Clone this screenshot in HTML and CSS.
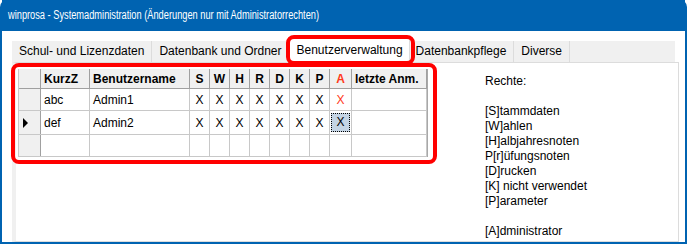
FILE: index.html
```html
<!DOCTYPE html>
<html lang="de">

<head>
    <meta charset="UTF-8">
    <title>winprosa - Systemadministration</title>
    <link rel="stylesheet" href="styles.css">
</head>

<body>
    <div class="window">
        <div class="titlebar"><span>winprosa - Systemadministration (Änderungen nur mit Administratorrechten)</span></div>

        <div class="client">
            <!-- Reiter -->
            <div class="tabs">
                <div class="tab">Schul- und Lizenzdaten</div>
                <div class="tab">Datenbank und Ordner</div>
                <div class="tab active marked">Benutzerverwaltung</div>
                <div class="tab">Datenbankpflege</div>
                <div class="tab">Diverse</div>
            </div>

            <div class="panel">
                <div class="grid-box marked">
                    <table class="grid">
                        <tr class="head">
                            <th class="ind"></th>
                            <th class="left">KurzZ</th>
                            <th class="left">Benutzername</th>
                            <th>S</th>
                            <th>W</th>
                            <th>H</th>
                            <th>R</th>
                            <th>D</th>
                            <th>K</th>
                            <th>P</th>
                            <th class="admin">A</th>
                            <th class="left">letzte Anm.</th>
                        </tr>
                        <tr>
                            <td class="ind"></td>
                            <td class="left">abc</td>
                            <td class="left">Admin1</td>
                            <td>X</td>
                            <td>X</td>
                            <td>X</td>
                            <td>X</td>
                            <td>X</td>
                            <td>X</td>
                            <td>X</td>
                            <td class="admin">X</td>
                            <td></td>
                        </tr>
                        <tr>
                            <td class="ind"><span class="arrow"></span></td>
                            <td class="left">def</td>
                            <td class="left">Admin2</td>
                            <td>X</td>
                            <td>X</td>
                            <td>X</td>
                            <td>X</td>
                            <td>X</td>
                            <td>X</td>
                            <td>X</td>
                            <td class="current"><span>X</span></td>
                            <td></td>
                        </tr>
                        <tr>
                            <td class="ind"></td>
                            <td></td>
                            <td></td>
                            <td></td>
                            <td></td>
                            <td></td>
                            <td></td>
                            <td></td>
                            <td></td>
                            <td></td>
                            <td></td>
                            <td></td>
                        </tr>
                    </table>
                </div>

                <!-- Legende der Rechte -->
                <div class="rights">
                    <p>Rechte:</p>
                    <p>&nbsp;</p>
                    <p>[S]tammdaten</p>
                    <p>[W]ahlen</p>
                    <p>[H]albjahresnoten</p>
                    <p>P[r]üfungsnoten</p>
                    <p>[D]rucken</p>
                    <p>[K] nicht verwendet</p>
                    <p>[P]arameter</p>
                    <p>&nbsp;</p>
                    <p>[A]dministrator</p>
                </div>
            </div>
        </div>
    </div>
</body>

</html>
```

FILE: styles.css
```css
html, body {
    margin: 0;
    height: 100%;
    overflow: hidden;
    background: #fff;
}

body {
    font-family: "Liberation Sans", Arial, sans-serif;
    font-size: 12px;
    color: #000;
}

/* Fensterrahmen */
.window {
    height: 100%;
    border: 2px solid #0063b1;
    border-top: 0;
    border-radius: 7px 7px 0 0;
    box-sizing: border-box;
    display: flex;
    flex-direction: column;
}

.titlebar {
    height: 31px;
    line-height: 31px;
    padding-left: 6px;
    background: #0063b1;
    color: #fff;
    white-space: nowrap;
}

/* Titelschrift ist schmaler als die normale Schrift */
.titlebar span {
    display: inline-block;
    font-size: 12.5px;
    transform: scaleX(0.74);
    transform-origin: left center;
}

.client {
    flex: 1;
    min-height: 0;
    padding: 10px 10px 0 10px;
    display: flex;
    flex-direction: column;
}

/* Reiter */
.tabs {
    display: flex;
    align-items: flex-end;
    flex: none;
    height: 21px;
    background: #f0f0f0;
}

.tab {
    height: 21px;
    line-height: 21px;
    padding: 0 7px;
    border-right: 1px solid #dcdcdc;
    white-space: nowrap;
    position: relative;
}

.tab.active {
    height: 23px;
    line-height: 22px;
    margin: 0 -1px 0 -2px;
    padding: 0 6px 0 8px;
    background: #fff;
    border: 1px solid #dcdcdc;
    border-bottom: 0;
    z-index: 1;
}

/* rote Markierungen */
.marked::after {
    content: "";
    position: absolute;
    border: 4px solid #ff0000;
    border-radius: 8px;
    pointer-events: none;
}

.tab.marked::after {
    top: -4px;
    bottom: -3px;
    left: -3px;
    right: -6px;
}

.panel {
    flex: 1;
    border: 1px solid #dcdcdc;
    border-left: 4px solid #f0f0f0;
    margin-right: -4px;
    padding: 6px 0 0 2px;
    display: flex;
    align-items: flex-start;
}

.grid-box {
    position: relative;
    border-left: 1px solid #c8c8c8;
    border-right: 1px solid #a8a8a8;
}

.grid-box.marked::after {
    top: -6px;
    bottom: -7px;
    left: -8px;
    right: -10px;
}

/* Tabelle */
.grid {
    border-collapse: collapse;
    table-layout: fixed;
}

.grid th,
.grid td {
    width: 19px;
    padding: 0;
    height: 21px;
    border: 1px solid #c8c8c8;
    border-top: 0;
    border-left: 0;
    text-align: center;
    white-space: nowrap;
    overflow: hidden;
}

.grid th {
    height: 19px;
    background: #f0f0f0;
    font-weight: bold;
    border-right-color: #a0a0a0;
    border-bottom-color: #a0a0a0;
}

.grid .left {
    text-align: left;
    padding-left: 3px;
}

.grid tr > :nth-child(1) { width: 21px; }
.grid tr > :nth-child(2) { width: 45px; }
.grid tr > :nth-child(3) { width: 96px; }
.grid tr > :nth-child(12) { width: 71px; }

.grid td.ind {
    background: #f0f0f0;
    border-right-color: #a0a0a0;
}

.grid .admin {
    color: #ff3a1a;
}

.arrow {
    display: block;
    margin-left: 4px;
    width: 0;
    height: 0;
    border-top: 5px solid transparent;
    border-bottom: 5px solid transparent;
    border-left: 5px solid #000;
}

.grid td.current {
    padding: 1px;
}

.grid td.current span {
    display: block;
    height: 17px;
    line-height: 17px;
    background: #c4d4e4;
    border: 1px dotted #000;
}

/* Legende */
.rights {
    margin-left: 57px;
    padding-top: 5px;
}

.rights p {
    margin: 0;
    line-height: 15px;
}
```
